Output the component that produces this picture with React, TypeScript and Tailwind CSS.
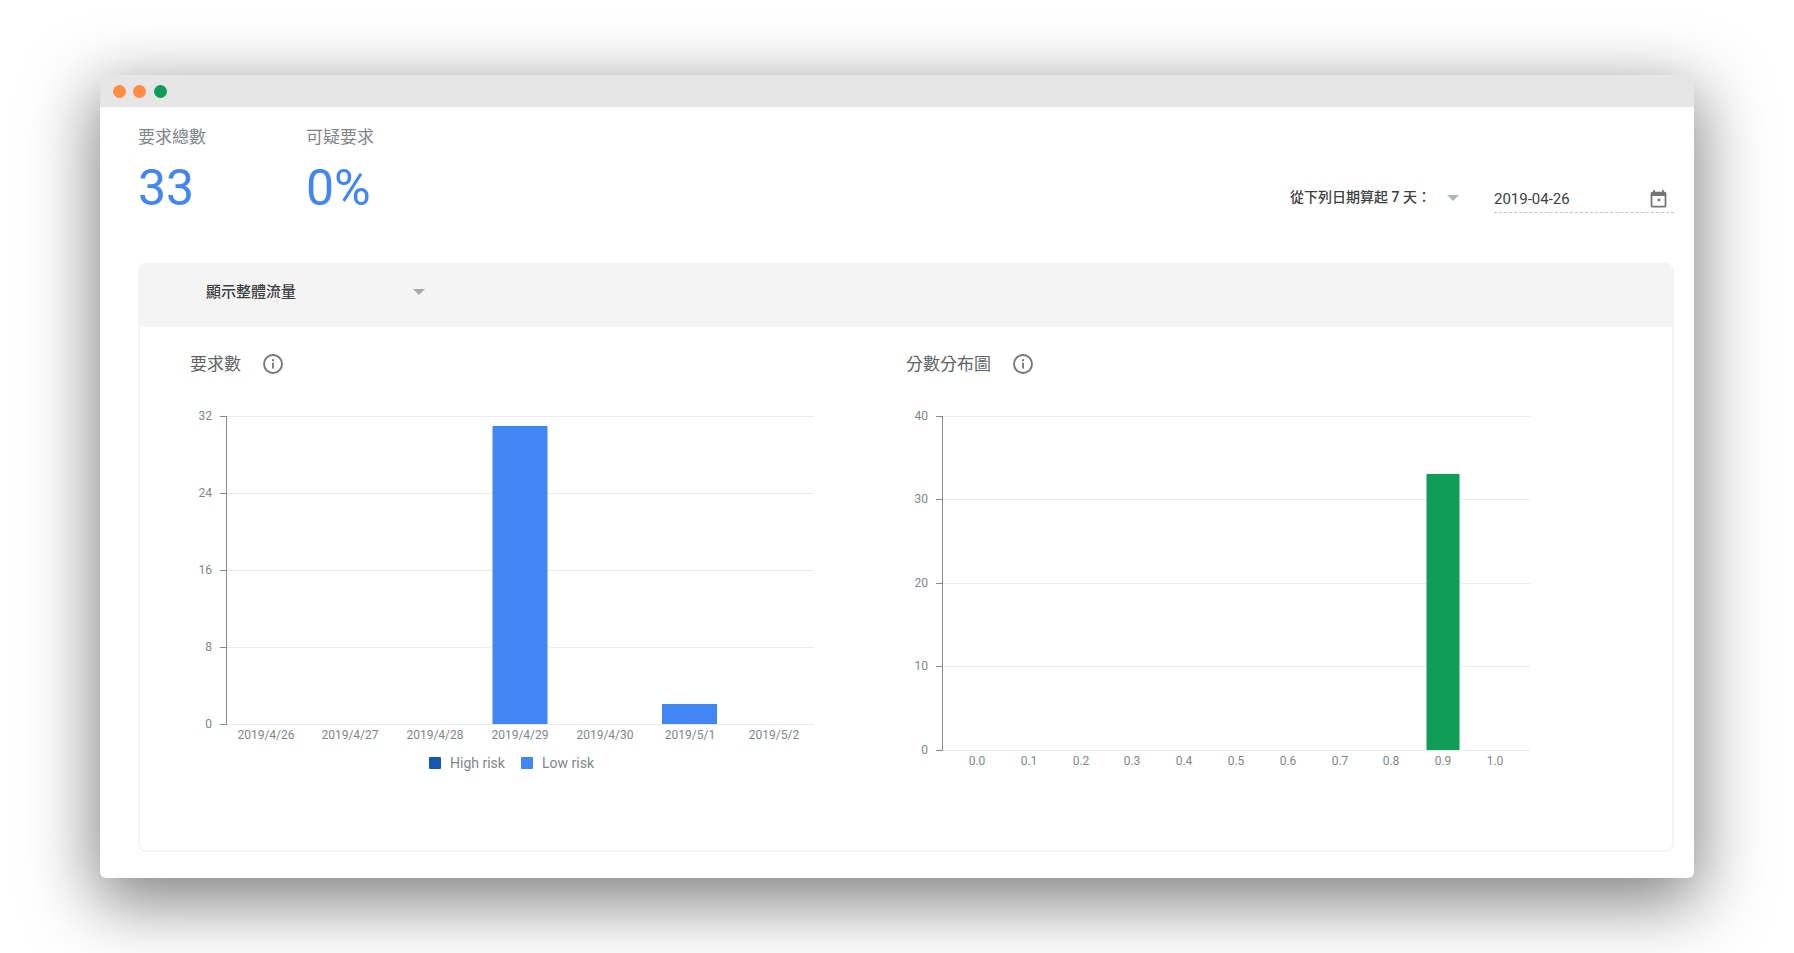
const sans = "font-['Roboto','Noto_Sans_CJK_TC',sans-serif]";

interface Tick {
  label: string;
  y: number;
}

interface Bar {
  x: number;
  width: number;
  top: number;
}

interface ChartProps {
  height: number;
  ticks: Tick[];
  labels: { text: string; x: number }[];
  bars: Bar[];
  barClass: string;
  right: number;
  labelEnd: number;
  baseline: number;
}

const axisX = 36;

// y values are relative to the top of the svg
function Chart({ height, ticks, labels, bars, barClass, right, labelEnd, baseline }: ChartProps) {
  return (
    <svg width="640" height={height} className="block">
      {ticks.map((t) => (
        <g key={t.label}>
          <line x1={axisX + 0.5} x2={right} y1={t.y + 0.5} y2={t.y + 0.5} stroke="#ebebeb" />
          <line x1={axisX - 6} x2={axisX} y1={t.y + 0.5} y2={t.y + 0.5} stroke="#8a8a8a" />
          <text x={labelEnd} y={t.y + 4} textAnchor="end" className="fill-[#80868b] text-xs">
            {t.label}
          </text>
        </g>
      ))}
      <line x1={axisX + 0.5} x2={axisX + 0.5} y1={ticks[0].y} y2={baseline + 1} stroke="#8a8a8a" />
      {bars.map((b) => (
        <rect key={b.x} x={b.x} y={b.top} width={b.width} height={baseline - b.top} className={barClass} />
      ))}
      {labels.map((l) => (
        <text key={l.text} x={l.x} y={baseline + 15} textAnchor="middle" className="fill-[#80868b] text-xs">
          {l.text}
        </text>
      ))}
    </svg>
  );
}

function InfoIcon() {
  return (
    <svg width="20" height="20" viewBox="0 0 20 20" fill="none" stroke="#757575" className="mb-[2px]">
      <circle cx="10" cy="10" r="9" strokeWidth="1.9" />
      <circle cx="10" cy="6.2" r="1.1" fill="#757575" stroke="none" />
      <rect x="9.1" y="8.6" width="1.8" height="6" fill="#757575" stroke="none" />
    </svg>
  );
}

function Caret({ color }: { color: string }) {
  return (
    <svg width="12" height="6" viewBox="0 0 12 6" fill={color}>
      <path d="M0 0h12L6 6z" />
    </svg>
  );
}

const requestTicks = [
  { label: "32", y: 16 },
  { label: "24", y: 93 },
  { label: "16", y: 170 },
  { label: "8", y: 247 },
  { label: "0", y: 324 },
];

const requestLabels = [
  { text: "2019/4/26", x: 76 },
  { text: "2019/4/27", x: 160 },
  { text: "2019/4/28", x: 245 },
  { text: "2019/4/29", x: 330 },
  { text: "2019/4/30", x: 415 },
  { text: "2019/5/1", x: 500 },
  { text: "2019/5/2", x: 584 },
];

const scoreTicks = [
  { label: "40", y: 16 },
  { label: "30", y: 99 },
  { label: "20", y: 183 },
  { label: "10", y: 266 },
  { label: "0", y: 350 },
];

const scoreLabels = [
  { text: "0.0", x: 71 },
  { text: "0.1", x: 123 },
  { text: "0.2", x: 175 },
  { text: "0.3", x: 226 },
  { text: "0.4", x: 278 },
  { text: "0.5", x: 330 },
  { text: "0.6", x: 382 },
  { text: "0.7", x: 434 },
  { text: "0.8", x: 485 },
  { text: "0.9", x: 537 },
  { text: "1.0", x: 589 },
];

export default function App() {
  return (
    <div className={`h-[953px] w-[1794px] overflow-hidden bg-white pl-[100px] pt-[75px] ${sans}`}>
      <div className="h-[803px] w-[1594px] rounded-md bg-white shadow-[0_20px_68px_4px_rgba(0,0,0,0.5)]">
        <div className="flex h-8 items-center gap-[7.4px] rounded-t-md bg-[#e6e6e6] pl-[13px]">
          <div className="h-[13px] w-[13px] rounded-full bg-[#ff8c42]" />
          <div className="h-[13px] w-[13px] rounded-full bg-[#ff8c42]" />
          <div className="h-[13px] w-[13px] rounded-full bg-[#0f9d58]" />
        </div>

        <div className="pl-[38px] pr-5">
          <div className="flex h-[156px] items-start">
            <div className="w-[168px] pt-[18px]">
              <div className="text-[17px] leading-6 text-[#80868b]">要求總數</div>
              <div className="mt-[9px] text-[50px] font-normal leading-[60px] text-[#4285f4]">33</div>
            </div>
            <div className="pt-[18px]">
              <div className="text-[17px] leading-6 text-[#80868b]">可疑要求</div>
              <div className="mt-[9px] text-[50px] font-normal leading-[60px] text-[#4285f4]">0%</div>
            </div>
            <div className="ml-auto mt-[78px] flex items-center">
              <span className="mb-[6px] text-sm font-medium leading-6 text-[#3c4043]">從下列日期算起 7 天：</span>
              <div className="mb-1 ml-4 mr-[35px] flex">
                <Caret color="#b0b7b4" />
              </div>
              <div className="flex h-[26px] w-[180px] items-center justify-between border-b border-dashed border-[#c4c4c4] pr-[5px]">
                <span className="text-[15px] text-[#3c4043]">2019-04-26</span>
                <svg width="21" height="21" viewBox="0 0 24 24" fill="#757575">
                  <path d="M11 11h3v3h-3zM16 1v2H8V1H6v2H5a2 2 0 0 0-2 2v14a2 2 0 0 0 2 2h14a2 2 0 0 0 2-2V5a2 2 0 0 0-2-2h-1V1h-2zm3 18H5V8h14v11z" />
                </svg>
              </div>
            </div>
          </div>

          <div className="h-[589px] w-[1536px] overflow-hidden rounded-lg border-2 border-t-0 border-[#f4f4f4]">
            <div className="flex h-[64px] items-center bg-[#f4f4f4] pb-[6px] pl-[66px]">
              <span className="w-[207px] text-[15px] font-medium text-[#3c4043]">顯示整體流量</span>
              <Caret color="#a8a8a8" />
            </div>
            <div className="flex pl-[50px] pt-[26px]">
              <div className="w-[716px]">
                <div className="flex h-6 items-center gap-[22px] text-[17px] text-[#5f6368]">
                  <span>要求數</span>
                  <InfoIcon />
                </div>
                <div className="mt-[23px]">
                  <Chart
                    height={345}
                    ticks={requestTicks}
                    labels={requestLabels}
                    bars={[
                      { x: 302.5, width: 55, top: 26 },
                      { x: 472, width: 55, top: 304 },
                    ]}
                    barClass="fill-[#4285f4]"
                    right={624}
                    labelEnd={22}
                    baseline={324}
                  />
                </div>
                <div className="mt-2 flex items-center pl-[239px] text-sm text-[#80868b]">
                  <div className="h-3 w-3 rounded-[1px] bg-[#1558af]" />
                  <span className="ml-[9px] w-[71px]">High risk</span>
                  <div className="h-3 w-3 rounded-[1px] bg-[#4285f4]" />
                  <span className="ml-[9px]">Low risk</span>
                </div>
              </div>
              <div>
                <div className="flex h-6 items-center gap-[22px] text-[17px] text-[#5f6368]">
                  <span>分數分布圖</span>
                  <InfoIcon />
                </div>
                <div className="mt-[23px]">
                  <Chart
                    height={370}
                    ticks={scoreTicks}
                    labels={scoreLabels}
                    bars={[{ x: 520.5, width: 33, top: 74 }]}
                    barClass="fill-[#0f9d58]"
                    right={624}
                    labelEnd={22}
                    baseline={350}
                  />
                </div>
              </div>
            </div>
          </div>
        </div>
      </div>
    </div>
  );
}
